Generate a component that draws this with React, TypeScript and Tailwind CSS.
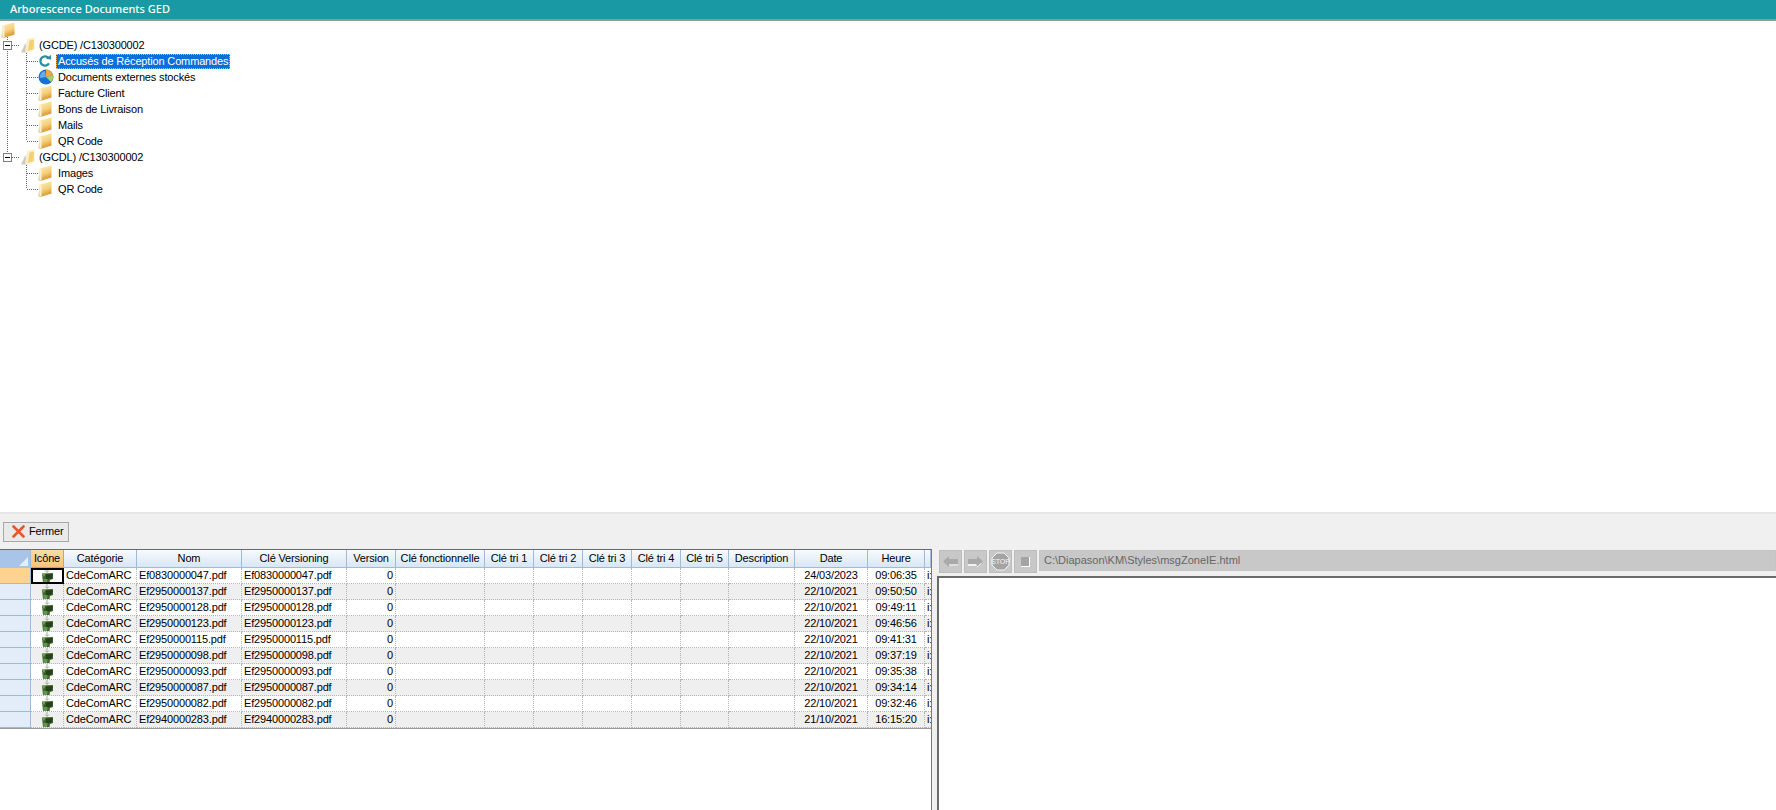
import React from "react";

function Folder() {
  const id = React.useId();
  return (
    <svg width="14" height="16" viewBox="0 0 14 16" className="shrink-0">
      <defs>
        <linearGradient id={id} x1="0" y1="0" x2="0.3" y2="1">
          <stop offset="0" stopColor="#fdeeb8" />
          <stop offset="0.6" stopColor="#f6d078" />
          <stop offset="1" stopColor="#d9982c" />
        </linearGradient>
      </defs>
      <path d="M0 15.5 L2 5 L4 5 L4 15.5 Z" fill="#d6d2c6" />
      <path d="M1.5 3.5 L13.5 0.5 L13.5 12.5 L4 15.5 L1.5 15.5 Z" fill={`url(#${id})`} />
      <path d="M1.5 3.5 L3.5 3 L3.5 15 L1.5 15.5 Z" fill="#f8f1d8" />
    </svg>
  );
}

function OpenFolder() {
  return (
    <svg width="14" height="16" viewBox="0 0 14 16" className="shrink-0">
      <path d="M0 15.5 L4.5 6 L6.5 15.5 Z" fill="#cfcabb" />
      <path d="M4 15.5 L6 2 L13.5 0.5 L13.5 12.5 L6.5 15.5 Z" fill="#f7eecb" />
      <path d="M7 14 L8.5 3.5 L12.8 2.5 L12.8 11.8 Z" fill="#f5cf72" />
    </svg>
  );
}

function Refresh() {
  return (
    <svg width="14" height="14" viewBox="0 0 14 14" className="shrink-0">
      <path d="M10.8 4.4 A4.6 4.6 0 1 0 11 9.4" fill="none" stroke="#2b8f9b" strokeWidth="2.3" />
      <path d="M8 5 L13.2 5.6 L12.8 0.8 Z" fill="#2b8f9b" />
    </svg>
  );
}

function Pie() {
  return (
    <svg width="16" height="16" viewBox="0 0 16 16" className="shrink-0">
      <circle cx="8" cy="8" r="7.5" fill="#1b6fd2" />
      <path d="M2 9 A6 6 0 0 1 7 2 L8 8 Z" fill="#5fb0f0" />
      <path d="M8 8 L8 0.5 A7.5 7.5 0 0 1 15 6 Z" fill="#f0a83e" />
      <path d="M8 8 L15 6 A7.5 7.5 0 0 1 13 13 Z" fill="#a6d06a" />
    </svg>
  );
}

function Minus() {
  return (
    <span className="flex h-[9px] w-[9px] items-center justify-center border border-[#7f7f7f] bg-white">
      <span className="h-px w-[5px] bg-black" />
    </span>
  );
}

type TreeRow = {
  label: string;
  level: 0 | 1;
  icon?: "refresh" | "pie";
  selected?: boolean;
  last?: boolean;
  trunk?: boolean;
};

const tree: TreeRow[] = [
  { label: "(GCDE) /C130300002", level: 0, trunk: true },
  { label: "Accusés de Réception Commandes", level: 1, icon: "refresh", selected: true, trunk: true },
  { label: "Documents externes stockés", level: 1, icon: "pie", trunk: true },
  { label: "Facture Client", level: 1, trunk: true },
  { label: "Bons de Livraison", level: 1, trunk: true },
  { label: "Mails", level: 1, trunk: true },
  { label: "QR Code", level: 1, last: true, trunk: true },
  { label: "(GCDL) /C130300002", level: 0, trunk: false },
  { label: "Images", level: 1, trunk: false },
  { label: "QR Code", level: 1, last: true, trunk: false },
];

function Lines({ row }: { row: TreeRow }) {
  const d = "1 1";
  if (row.level === 0) {
    return (
      <svg width="21" height="16" className="shrink-0">
        {row.trunk && <line x1="7.5" y1="0" x2="7.5" y2="16" stroke="#666" strokeDasharray={d} />}
        {!row.trunk && <line x1="7.5" y1="0" x2="7.5" y2="8" stroke="#666" strokeDasharray={d} />}
        <line x1="12" y1="8.5" x2="20" y2="8.5" stroke="#666" strokeDasharray={d} />
      </svg>
    );
  }
  return (
    <svg width="38" height="16" className="shrink-0">
      {row.trunk && <line x1="7.5" y1="0" x2="7.5" y2="16" stroke="#666" strokeDasharray={d} />}
      <line x1="26.5" y1="0" x2="26.5" y2={row.last ? 8 : 16} stroke="#666" strokeDasharray={d} />
      <line x1="27" y1="8.5" x2="38" y2="8.5" stroke="#666" strokeDasharray={d} />
    </svg>
  );
}

const columns = [
  { label: "Catégorie", w: "w-[73px]" },
  { label: "Nom", w: "w-[105px]" },
  { label: "Clé Versioning", w: "w-[105px]" },
  { label: "Version", w: "w-[49px]" },
  { label: "Clé fonctionnelle", w: "w-[89px]" },
  { label: "Clé tri 1", w: "w-[49px]" },
  { label: "Clé tri 2", w: "w-[49px]" },
  { label: "Clé tri 3", w: "w-[49px]" },
  { label: "Clé tri 4", w: "w-[49px]" },
  { label: "Clé tri 5", w: "w-[48px]" },
  { label: "Description", w: "w-[66px]" },
  { label: "Date", w: "w-[73px]" },
  { label: "Heure", w: "w-[57px]" },
  { label: "", w: "w-[6px]" },
];

const rows = [
  ["Ef0830000047.pdf", "24/03/2023", "09:06:35"],
  ["Ef2950000137.pdf", "22/10/2021", "09:50:50"],
  ["Ef2950000128.pdf", "22/10/2021", "09:49:11"],
  ["Ef2950000123.pdf", "22/10/2021", "09:46:56"],
  ["Ef2950000115.pdf", "22/10/2021", "09:41:31"],
  ["Ef2950000098.pdf", "22/10/2021", "09:37:19"],
  ["Ef2950000093.pdf", "22/10/2021", "09:35:38"],
  ["Ef2950000087.pdf", "22/10/2021", "09:34:14"],
  ["Ef2950000082.pdf", "22/10/2021", "09:32:46"],
  ["Ef2940000283.pdf", "21/10/2021", "16:15:20"],
];

function Leaf() {
  return (
    <svg width="13" height="16" viewBox="0 0 13 16" className="shrink-0">
      <path d="M6 0 V4 M4 2.5 L6 4.5 L8 2.5" stroke="#a9a9a9" strokeWidth="1" fill="none" />
      <path d="M1 5.5 L12 5 L12 11 L9 12 L8.5 15 L2 15 Z" fill="#3d6a2c" />
      <path d="M4.5 6.5 L11.5 6 L11 10.5 L5 11.5 Z" fill="#24401f" />
      <path d="M1 5.5 L4.5 5.5 L3 9 Z" fill="#7fa35a" />
      <path d="M2.5 11 L6.5 11 L6 15 L2.5 15 Z" fill="#6b9350" />
    </svg>
  );
}

function Cell({ w, children, align }: { w: string; children?: React.ReactNode; align?: string }) {
  return (
    <div
      className={`h-4 shrink-0 overflow-hidden whitespace-nowrap border-r border-b border-dotted border-[#b5b5b5] px-[2px] leading-[15px] ${w} ${align ?? ""}`}
    >
      {children}
    </div>
  );
}

function NavButton({ children }: { children: React.ReactNode }) {
  return (
    <div className="flex h-[23px] w-[23px] shrink-0 items-center justify-center border border-[#bdbdbd] bg-[#c8c8c8]">
      {children}
    </div>
  );
}

export default function App() {
  return (
    <div className="flex h-[810px] w-[1776px] flex-col overflow-hidden bg-white font-['Liberation_Sans',sans-serif] text-[11px] tracking-[-0.15px] text-black">
      <div className="flex h-[21px] shrink-0 items-center border-b-2 border-[#8a9a9c] bg-[#1899a3] pl-[10px] font-['Noto_Sans',sans-serif] text-[11px] font-medium tracking-normal text-white">
        Arborescence Documents GED
      </div>

      <div className="h-[491px] shrink-0 pt-[1px]">
        <div className="flex h-[15px] pl-[1px]">
          <Folder />
        </div>
        {tree.map((row, i) => (
          <div key={i} className="flex h-4 items-center">
            {row.level === 0 ? (
              <>
                <div className="relative flex shrink-0">
                  <Lines row={row} />
                  <span className="absolute left-[3px] top-[4px]">
                    <Minus />
                  </span>
                </div>
                <OpenFolder />
                <span className="ml-[4px] whitespace-nowrap">{row.label}</span>
              </>
            ) : (
              <>
                <Lines row={row} />
                <span className="flex w-[18px] shrink-0 justify-start">
                  {row.icon === "refresh" ? <Refresh /> : row.icon === "pie" ? <Pie /> : <Folder />}
                </span>
                {row.selected ? (
                  <span className="h-[15px] whitespace-nowrap border border-dotted border-[#ffb060] bg-[#0a6fd6] px-[1px] leading-[13px] text-white">
                    {row.label}
                  </span>
                ) : (
                  <span className="whitespace-nowrap pl-[2px]">{row.label}</span>
                )}
              </>
            )}
          </div>
        ))}
      </div>

      <div className="h-[2px] shrink-0 bg-[#e6e6e6]" />
      <div className="flex h-[35px] shrink-0 items-center bg-[#f0f0f0] pl-[3px]">
        <div className="flex h-[20px] w-[66px] items-center gap-[4px] border border-[#a8a8a8] bg-[#e9e9e9] pl-[8px]">
          <svg width="13" height="13" viewBox="0 0 13 13" className="shrink-0">
            <path d="M1.5 1.5 L11.5 11.5 M11.5 1.5 L1.5 11.5" stroke="#e8562a" strokeWidth="2.6" strokeLinecap="round" />
          </svg>
          <span className="leading-none">Fermer</span>
        </div>
      </div>

      <div className="flex min-h-0 flex-1 bg-white">
        <div className="w-[932px] shrink-0 overflow-hidden border-r border-[#7a7a7a]">
          <div className="flex h-[19px] whitespace-nowrap border-t border-[#6a6a6a] text-center">
            <div className="flex h-[18px] w-[31px] shrink-0 items-end justify-end border-r border-[#9ebbd8] bg-[#a8c4e8] p-[2px]">
              <span className="h-0 w-0 border-b-[9px] border-l-[9px] border-b-white/70 border-l-transparent" />
            </div>
            <div className="h-[18px] w-[33px] shrink-0 border-r border-b border-[#e0a040] bg-gradient-to-b from-[#fcdca6] to-[#f8c27a] leading-[17px]">
              Icône
            </div>
            {columns.map((c, i) => (
              <div
                key={i}
                className={`h-[18px] shrink-0 border-r border-b border-[#9ebbd8] bg-gradient-to-b from-[#f8fbfe] to-[#d8e6f5] leading-[17px] ${c.w}`}
              >
                {c.label}
              </div>
            ))}
          </div>
          {rows.map((r, i) => (
            <div key={i} className={`flex h-4 ${i % 2 ? "bg-[#efefef]" : "bg-white"}`}>
              <div
                className={`h-4 w-[31px] shrink-0 border-r border-b border-[#9ebbd8] ${i === 0 ? "bg-[#ffd28e]" : "bg-[#e3ecf8]"}`}
              />
              <div
                className={`flex h-4 w-[33px] shrink-0 justify-center overflow-hidden ${
                  i === 0
                    ? "items-center border-2 border-black bg-white"
                    : "items-start border-r border-b border-dotted border-[#b5b5b5]"
                }`}
              >
                <Leaf />
              </div>
              <Cell w="w-[73px]">CdeComARC</Cell>
              <Cell w="w-[105px]">{r[0]}</Cell>
              <Cell w="w-[105px]">{r[0]}</Cell>
              <Cell w="w-[49px]" align="text-right">
                0
              </Cell>
              <Cell w="w-[89px]" />
              <Cell w="w-[49px]" />
              <Cell w="w-[49px]" />
              <Cell w="w-[49px]" />
              <Cell w="w-[49px]" />
              <Cell w="w-[48px]" />
              <Cell w="w-[66px]" />
              <Cell w="w-[73px]" align="text-center">
                {r[1]}
              </Cell>
              <Cell w="w-[57px]" align="text-center">
                {r[2]}
              </Cell>
              <div className="h-4 w-[6px] shrink-0 overflow-hidden border-b border-dotted border-[#b5b5b5] pl-[2px] leading-[15px]">
                i:
              </div>
            </div>
          ))}
          <div className="h-px bg-[#9a9a9a]" />
        </div>

        <div className="w-[5px] shrink-0 bg-[#f0f0f0]" />

        <div className="flex min-w-0 flex-1 flex-col">
          <div className="flex h-[27px] shrink-0 gap-[2px] bg-[#f0f0f0] pl-[2px] pt-[1px]">
            <NavButton>
              <svg width="17" height="13" viewBox="0 0 17 13">
                <path d="M7 1 L1 6.5 L7 12 V9 H16 V4 H7 Z" fill="#a9a9a9" />
                <path d="M7 9.5 H16 V10.5 H7 Z" fill="#f2f2f2" />
              </svg>
            </NavButton>
            <NavButton>
              <svg width="17" height="13" viewBox="0 0 17 13">
                <path d="M10 1 L16 6.5 L10 12 V9 H1 V4 H10 Z" fill="#a9a9a9" />
                <path d="M1 9.5 H9 V10.5 H1 Z M10 12 L14 8.5" stroke="#f2f2f2" fill="#f2f2f2" />
              </svg>
            </NavButton>
            <NavButton>
              <svg width="19" height="19" viewBox="0 0 19 19">
                <path d="M6 1 H13 L18 6 V13 L13 18 H6 L1 13 V6 Z" fill="#a4a4a4" stroke="#f2f2f2" strokeWidth="1" />
                <text x="9.5" y="12" textAnchor="middle" fontSize="7" fontFamily="Liberation Sans" fill="#f4f4f4">
                  STOP
                </text>
              </svg>
            </NavButton>
            <NavButton>
              <span className="h-[10px] w-[9px] border-r border-b border-white bg-[#a4a4a4]" />
            </NavButton>
            <div className="flex h-[21px] flex-1 items-center border border-[#c4c4c4] bg-[#c8c8c8] pl-[4px] tracking-normal text-[#666]">
              C:\Diapason\KM\Styles\msgZoneIE.html
            </div>
          </div>
          <div className="flex-1 border-t-2 border-l-2 border-[#6a6a6a] bg-white" />
        </div>
      </div>
    </div>
  );
}
